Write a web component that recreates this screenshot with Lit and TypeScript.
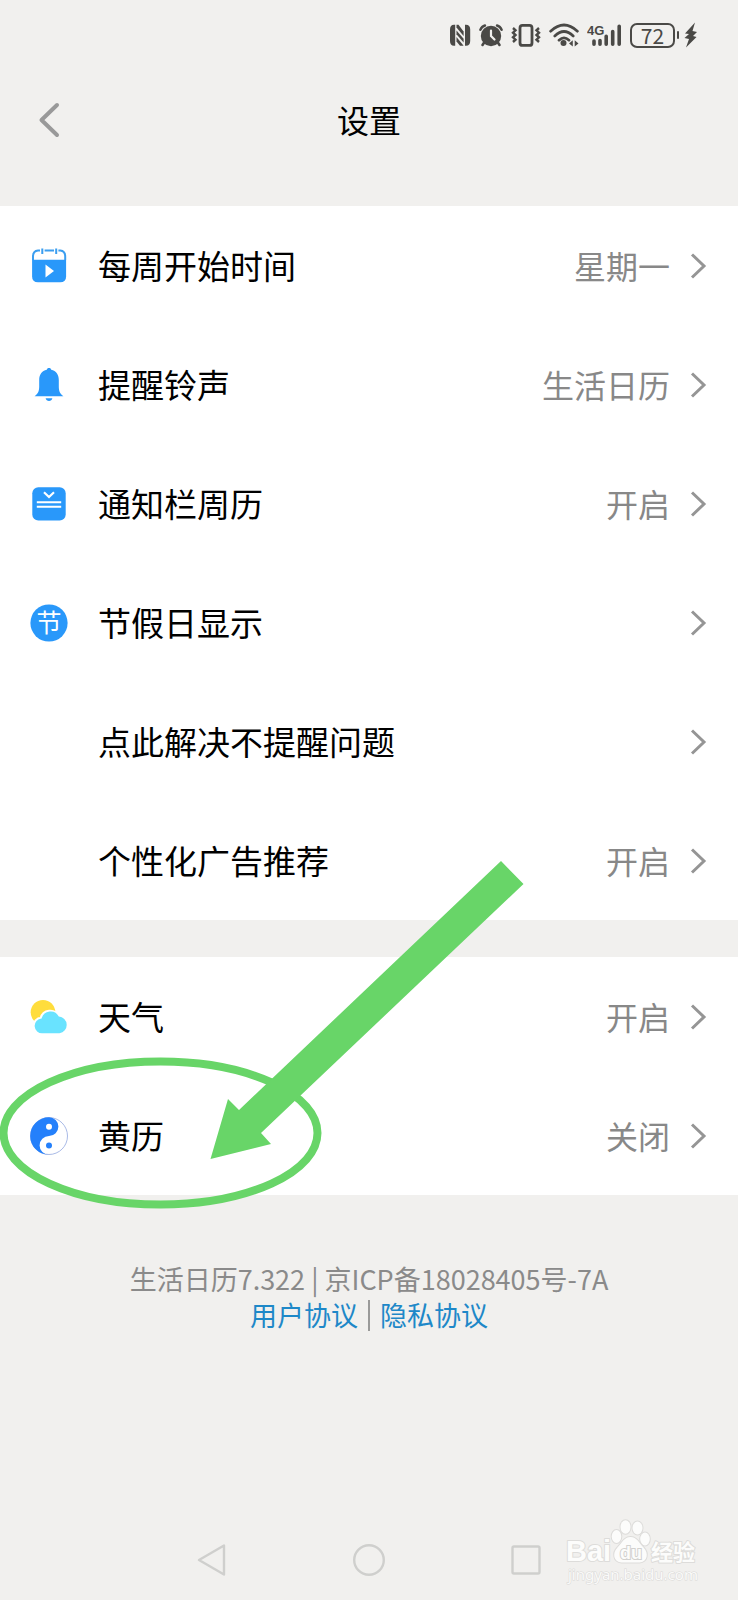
import { LitElement, html, css, nothing, TemplateResult } from "lit";
import { customElement, property } from "lit/decorators.js";

const FONT = css`"Noto Sans CJK SC", "Noto Sans", sans-serif`;

interface Item {
  label: string;
  value?: string;
  icon?: TemplateResult;
}

const calendarIcon = html`<svg viewBox="0 0 40 40" width="40" height="40" aria-hidden="true">
  <path d="M4 14V10.500Q4 5 9 4.500H11M15.600 4.500H25M29.400 4.500H31.300Q36.200 5 36.200 10.500V14" fill="none" stroke="#3b9ef0" stroke-width="2"/>
  <path d="M13.300 2.500V8M27.200 2.500V8" stroke="#3b9ef0" stroke-width="2"/>
  <path d="M3.100 13.800H37.100V30.500Q37.100 36.300 31.200 36.300H9Q3.100 36.300 3.100 30.500Z" fill="#2998fa"/>
  <path d="M16.500 18.500L25 25L16.500 31.500Z" fill="#fff"/>
</svg>`;

const bellIcon = html`<svg viewBox="0 0 40 40" width="40" height="40" aria-hidden="true">
  <path d="M20 3C21.300 3 22 3.700 22.200 4.700C27.200 5.900 29.800 9.600 29.800 15V21.500C29.800 26 31 28.800 34.400 31.300H5.600C9 28.800 10.200 26 10.200 21.500V15C10.200 9.600 12.800 5.900 17.800 4.700C18 3.700 18.700 3 20 3Z" fill="#2998fa"/>
  <path d="M16.600 33.300H23.400C22.900 35.200 21.700 36 20 36C18.300 36 17.100 35.200 16.600 33.300Z" fill="#2998fa"/>
</svg>`;

const noticeIcon = html`<svg viewBox="0 0 40 40" width="40" height="40" aria-hidden="true">
  <rect x="3.300" y="3.300" width="33.400" height="33.200" rx="6" fill="#2998fa"/>
  <path d="M15 8.300L20 13L25 8.300" fill="none" stroke="#fff" stroke-width="2.200"/>
  <path d="M7.800 18.300H32.200M7.800 22.700H32.200" stroke="#fff" stroke-width="2"/>
</svg>`;

const holidayIcon = html`<svg viewBox="0 0 40 40" width="40" height="40" aria-hidden="true">
  <circle cx="20" cy="20" r="18.600" fill="#2998fa"/>
  <text x="20" y="29" text-anchor="middle" font-size="25" fill="#fff" font-family="Noto Sans CJK SC, sans-serif">节</text>
</svg>`;

const weatherIcon = html`<svg viewBox="0 0 40 40" width="40" height="40" aria-hidden="true">
  <circle cx="14" cy="15.300" r="12.300" fill="#ffdd3c"/>
  <path d="M13 36.200A7.400 7.400 0 0 1 12.200 21.300A9.200 9.200 0 0 1 29.400 19.400A8.500 8.500 0 0 1 30 36.200Z" fill="#69e3ff" stroke="#fff" stroke-width="3.200"/>
  <path d="M13.500 36.300A7.400 7.400 0 0 1 12.600 21.500A9.200 9.200 0 0 1 29.800 19.600A8.400 8.400 0 0 1 30.500 36.300Z" fill="#69e3ff"/>
</svg>`;

const taijiIcon = html`<svg viewBox="0 0 40 40" width="40" height="40" aria-hidden="true">
  <circle cx="20" cy="20" r="18.500" fill="#fff" stroke="#93a8e0" stroke-width="0.800"/>
  <path d="M20 1.200A18.800 18.800 0 0 0 20 38.800A9.400 9.400 0 0 1 20 20A9.400 9.400 0 0 0 20 1.200Z" fill="#2480fb"/>
  <circle cx="20" cy="10.800" r="3" fill="#fff"/>
  <circle cx="20" cy="29.500" r="3" fill="#2480fb"/>
</svg>`;

@customElement("status-bar")
class StatusBar extends LitElement {
  static styles = css`
    :host {
      display: flex;
      justify-content: flex-end;
      align-items: center;
      gap: 8px;
      height: 70px;
      padding-right: 41px;
      color: #4a4946;
    }
    svg { display: block; fill: currentColor; }
    .battery {
      box-sizing: border-box;
      width: 45px;
      height: 25px;
      border: 2px solid currentColor;
      border-radius: 7px;
      font: 21px/20px ${FONT};
      text-align: center;
    }
    .power { display: flex; align-items: center; gap: 2px; }
    .cap { width: 2px; height: 8px; border-radius: 1px; background: currentColor; }
    .bolt { margin-left: 3px; }
  `;

  render() {
    return html`
      <svg width="22" height="26" viewBox="0 0 22 26" aria-label="NFC">
        <path d="M5 2.800H6.200V23.800H5Q1 23.800 1 19V7.600Q1 2.800 5 2.800Z"/>
        <path d="M17 2.800H16V23.800H17Q21.200 23.800 21.200 19V7.600Q21.200 2.800 17 2.800Z"/>
        <path d="M7.500 2.800H9.500L14.600 9.500V14L7.500 5.500Z"/>
        <path d="M7.500 8.500L14.600 16.800V20.500L7.500 12.200Z"/>
        <path d="M7.500 15L14.600 23.800H11L7.500 19.500Z"/>
      </svg>
      <svg width="24" height="26" viewBox="1 0 24 26" aria-label="闹钟">
        <path d="M2.400 7.800Q3.700 4.500 7 3.500M23.600 7.800Q22.300 4.500 19 3.500" fill="none" stroke="currentColor" stroke-width="2.400" stroke-linecap="round"/>
        <path d="M6.500 20L4.500 23M19.500 20L21.500 23" stroke="currentColor" stroke-width="2.600" stroke-linecap="round"/>
        <circle cx="13" cy="14" r="10.200"/>
        <path d="M13 8.500V14L16.500 17.500" fill="none" stroke="#f1f0ee" stroke-width="2.200" stroke-linecap="round"/>
      </svg>
      <svg width="30" height="26" viewBox="0 0 30 26" aria-label="振动">
        <rect x="9" y="3.400" width="12" height="20" rx="2.500" fill="none" stroke="currentColor" stroke-width="2.800"/>
        <path d="M2 6L4.500 8.300L2 10.700L4.500 13L2 15.300L4.500 17.700L2 20M28 6L25.500 8.300L28 10.700L25.500 13L28 15.300L25.500 17.700L28 20" fill="none" stroke="currentColor" stroke-width="2.400"/>
      </svg>
      <svg width="30" height="26" viewBox="0 0 30 26" aria-label="无线网络">
        <path d="M1.600 9.200Q15 -3.200 28.400 9.200M5.800 14Q15 5 24.200 14M10 18.200Q15 13.500 20 18.200" fill="none" stroke="currentColor" stroke-width="2.700" stroke-linecap="round"/>
        <circle cx="14.500" cy="21" r="3"/>
        <path d="M20 21.500L23.800 18.300V24.500ZM29.500 21.500L25.700 18.300V24.500Z"/>
      </svg>
      <svg width="35" height="26" viewBox="0 0 35 26" aria-label="信号">
        <text x="0" y="13" font-size="13" font-weight="700" font-family="Liberation Sans, sans-serif">4G</text>
        <path d="M7 19V22.300M13 18.500V22.300M19.200 14.300V22.300M25.700 9.600V22.300M32.200 4.300V22.300" stroke="currentColor" stroke-width="3.600" stroke-linecap="round"/>
      </svg>
      <div class="power">
        <div class="battery">72</div>
        <div class="cap"></div>
        <svg class="bolt" width="13" height="26" viewBox="0 0 13 26" aria-label="充电">
          <path d="M11 0.500L1 11.500L5 12L0.500 16L5 17L2 25.500L12.500 15L9 14L13 10L8.500 9Z"/>
        </svg>
      </div>
    `;
  }
}

@customElement("settings-list")
class SettingsList extends LitElement {
  @property({ attribute: false }) items: Item[] = [];

  static styles = css`
    :host { display: block; background: #fff; }
    .list { list-style: none; margin: 0; padding: 0; }
    .row {
      display: flex;
      align-items: center;
      width: 100%;
      height: 119px;
      padding: 0 30px 0 29px;
      border: 0;
      background: none;
      font: 33px/48px ${FONT};
      color: #000;
      text-align: left;
      cursor: pointer;
    }
    .icon { width: 40px; height: 40px; margin-right: 29px; }
    .label { flex: 1; }
    .label, .value { padding-bottom: 2px; }
    .value { color: #888; font-size: 32px; }
    .chevron { margin-left: 20px; }
  `;

  render() {
    return html`<ul class="list">
      ${this.items.map(
        (item) => html`<li>
          <button class="row" type="button">
            <span class="icon">${item.icon ?? nothing}</span>
            <span class="label">${item.label}</span>
            ${item.value ? html`<span class="value">${item.value}</span>` : nothing}
            <svg class="chevron" width="18" height="28" viewBox="0 0 18 28" aria-hidden="true">
              <path d="M2 2.500L14 14L2 25.500" fill="none" stroke="#959595" stroke-width="3"/>
            </svg>
          </button>
        </li>`
      )}
    </ul>`;
  }
}

@customElement("app-root")
class AppRoot extends LitElement {
  private general: Item[] = [
    { label: "每周开始时间", value: "星期一", icon: calendarIcon },
    { label: "提醒铃声", value: "生活日历", icon: bellIcon },
    { label: "通知栏周历", value: "开启", icon: noticeIcon },
    { label: "节假日显示", icon: holidayIcon },
    { label: "点此解决不提醒问题" },
    { label: "个性化广告推荐", value: "开启" },
  ];

  private extras: Item[] = [
    { label: "天气", value: "开启", icon: weatherIcon },
    { label: "黄历", value: "关闭", icon: taijiIcon },
  ];

  static styles = css`
    :host {
      display: flex;
      flex-direction: column;
      min-height: 100vh;
      background: #f1f0ee;
      font-family: ${FONT};
      overflow: hidden;
    }
    svg { display: block; }
    .header {
      display: grid;
      grid-template-columns: 80px 1fr 80px;
      align-items: center;
      height: 100px;
      margin-bottom: 36px;
    }
    .back, .key {
      display: grid;
      place-items: center;
      border: 0;
      padding: 0;
      background: none;
      cursor: pointer;
    }
    .back { width: 60px; height: 60px; margin-left: 19px; }
    .title {
      margin: 0;
      padding-bottom: 2px;
      font-size: 32px;
      line-height: 48px;
      font-weight: 400;
      text-align: center;
      color: #000;
    }
    .extras { position: relative; margin-top: 37px; }
    .mark {
      position: absolute;
      left: 0;
      top: -107px;
      pointer-events: none;
    }
    .footer {
      margin-top: 66px;
      font-size: 27px;
      line-height: 36px;
      color: #8a8a8a;
      text-align: center;
    }
    .about { margin: 0; }
    .links { display: flex; justify-content: center; align-items: center; gap: 10px; }
    .link { color: #1e88c8; text-decoration: none; }
    .divider { width: 2px; height: 31px; background: #9a9a99; }
    .keys {
      position: relative;
      display: grid;
      justify-content: center;
      grid-template-columns: repeat(3, 21.3%);
      margin-top: auto;
      height: 80px;
    }
    .watermark { position: absolute; right: 32px; bottom: 6px; }
  `;

  render() {
    return html`
      <status-bar></status-bar>
      <header class="header">
        <button class="back" type="button" aria-label="返回">
          <svg width="24" height="38" viewBox="0 0 24 38" aria-hidden="true">
            <path d="M20 4L4.500 19L20 34" fill="none" stroke="#999" stroke-width="4" stroke-linecap="round" stroke-linejoin="round"/>
          </svg>
        </button>
        <h1 class="title">设置</h1>
      </header>
      <main>
        <settings-list .items=${this.general}></settings-list>
        <div class="extras">
          <settings-list .items=${this.extras}></settings-list>
          <svg class="mark" width="530" height="370" viewBox="0 850 530 370" aria-hidden="true">
            <ellipse cx="160.500" cy="1133" rx="157" ry="71.500" fill="none" stroke="#68d568" stroke-width="8"/>
            <path d="M210.500 1159L228 1099L239 1110L501 861L523.500 884L261 1133L271 1144Z" fill="#68d568"/>
          </svg>
        </div>
      </main>
      <footer class="footer">
        <p class="about">生活日历7.322 | 京ICP备18028405号-7A</p>
        <nav class="links">
          <a class="link" href="#terms">用户协议</a>
          <span class="divider"></span>
          <a class="link" href="#privacy">隐私协议</a>
        </nav>
      </footer>
      <div class="keys">
        <button class="key" type="button" aria-label="后退">
          <svg width="32" height="34" viewBox="0 0 32 34"><path d="M28 2.500V31.500L3 17Z" fill="none" stroke="#cfcfcd" stroke-width="2.400" stroke-linejoin="round"/></svg>
        </button>
        <button class="key" type="button" aria-label="主页">
          <svg width="34" height="34" viewBox="0 0 34 34"><circle cx="17" cy="17" r="14.800" fill="none" stroke="#cfcfcd" stroke-width="2.400"/></svg>
        </button>
        <button class="key" type="button" aria-label="最近任务">
          <svg width="32" height="32" viewBox="0 0 32 32"><rect x="2.500" y="2.500" width="27" height="27" rx="1.500" fill="none" stroke="#cfcfcd" stroke-width="2.400"/></svg>
        </button>
        <svg class="watermark" width="144" height="76" viewBox="562 1518 144 76" aria-label="Baidu 经验">
          <g fill="#fcfcfb" stroke="#dddcda" stroke-width="2" paint-order="stroke" stroke-linejoin="round">
            <text x="566" y="1561" font-size="29" font-weight="700" font-family="Liberation Sans, sans-serif">Bai</text>
            <ellipse cx="616.500" cy="1536.500" rx="4.800" ry="6.500"/>
            <ellipse cx="625.500" cy="1527" rx="5" ry="6.800"/>
            <ellipse cx="637.500" cy="1528" rx="5" ry="6.500"/>
            <ellipse cx="645" cy="1539" rx="4.800" ry="6.500"/>
            <path d="M630.500 1537C637 1537 639 1543 643.500 1547.500C649 1553 647.500 1562 639.500 1562.500H621.500C613.500 1562 612 1553 617.500 1547.500C622 1543 624 1537 630.500 1537Z"/>
            <text x="651" y="1560" font-size="22" font-weight="700" font-family="Noto Sans CJK SC, sans-serif">经验</text>
          </g>
          <text x="620" y="1559" font-size="18" fill="#fcfcfb" stroke="#d2d1cf" stroke-width="2" paint-order="stroke" font-weight="700" font-family="Liberation Sans, sans-serif">du</text>
          <text x="568" y="1580" font-size="15" fill="#fafaf9" stroke="#d9d8d6" stroke-width="1" paint-order="stroke" font-family="Noto Sans, sans-serif">jingyan.baidu.com</text>
        </svg>
      </div>
    `;
  }
}
